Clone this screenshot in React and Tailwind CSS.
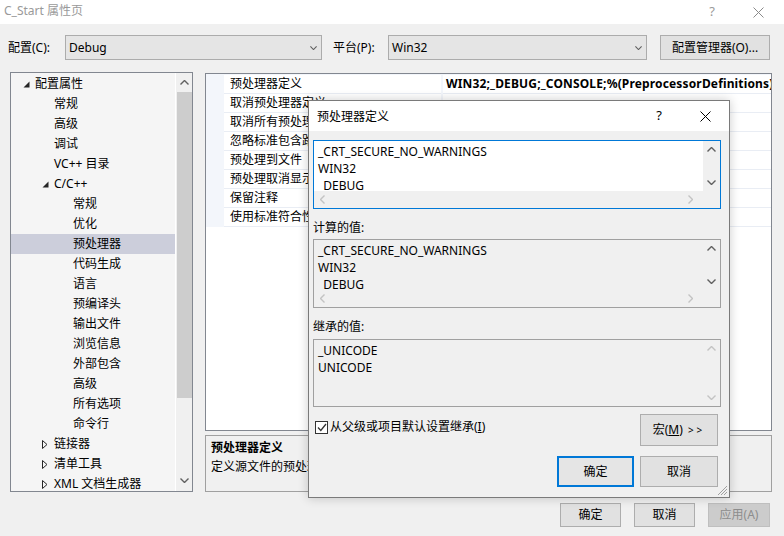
import React from "react";

const Chev = ({ dir = "down", className = "" }) => {
  const vertical = dir === "down" || dir === "up";
  const w = vertical ? 9 : 5;
  const h = vertical ? 5 : 9;
  const d = {
    down: "M0.5 0.5 L4.5 4.5 L8.5 0.5",
    up: "M0.5 4.5 L4.5 0.5 L8.5 4.5",
    left: "M4.5 0.5 L0.5 4.5 L4.5 8.5",
    right: "M0.5 0.5 L4.5 4.5 L0.5 8.5",
  }[dir];
  return (
    <svg width={w} height={h} viewBox={`0 0 ${w} ${h}`} className={className}>
      <path d={d} fill="none" stroke="currentColor" strokeWidth="1.4" />
    </svg>
  );
};

const XIcon = ({ size = 11, className = "" }) => (
  <svg width={size} height={size} viewBox={`0 0 ${size} ${size}`} className={className}>
    <path d={`M0.5 0.5 L${size - 0.5} ${size - 0.5} M${size - 0.5} 0.5 L0.5 ${size - 0.5}`} stroke="currentColor" strokeWidth="1" fill="none" />
  </svg>
);

const Dropdown = ({ text, w }) => (
  <div className={`h-[25px] ${w} border border-[#acacac] bg-[#e5e5e5] flex items-center pl-[3px] pr-[3px]`}>
    <span className="flex-1">{text}</span>
    <Chev dir="down" className="text-[#5f5f5f] w-[7px] h-[4px] mr-[1px]" />
  </div>
);

const tree = [
  { t: "配置属性", l: 0, tri: "open" },
  { t: "常规", l: 1 },
  { t: "高级", l: 1 },
  { t: "调试", l: 1 },
  { t: "VC++ 目录", l: 1 },
  { t: "C/C++", l: 1, tri: "open" },
  { t: "常规", l: 2 },
  { t: "优化", l: 2 },
  { t: "预处理器", l: 2, sel: true },
  { t: "代码生成", l: 2 },
  { t: "语言", l: 2 },
  { t: "预编译头", l: 2 },
  { t: "输出文件", l: 2 },
  { t: "浏览信息", l: 2 },
  { t: "外部包含", l: 2 },
  { t: "高级", l: 2 },
  { t: "所有选项", l: 2 },
  { t: "命令行", l: 2 },
  { t: "链接器", l: 1, tri: "closed" },
  { t: "清单工具", l: 1, tri: "closed" },
  { t: "XML 文档生成器", l: 1, tri: "closed" },
];

const Tri = ({ kind }) =>
  kind === "open" ? (
    <svg width="7" height="7" viewBox="0 0 7 7">
      <path d="M6.5 0.5 L6.5 6.5 L0.5 6.5 Z" fill="#262626" />
    </svg>
  ) : (
    <svg width="6" height="9" viewBox="0 0 6 9">
      <path d="M0.5 0.5 L5 4.5 L0.5 8.5 Z" fill="none" stroke="#262626" strokeWidth="1" />
    </svg>
  );

const props = [
  "预处理器定义",
  "取消预处理器定义",
  "取消所有预处理器定义",
  "忽略标准包含路径",
  "预处理到文件",
  "预处理取消显示行号",
  "保留注释",
  "使用标准符合性预处理器",
];

const TextBox = ({ lines, active, hscroll = true, faded = false, h }) => (
  <div className={`${h} w-full border flex flex-col ${active ? "border-[#0078d7]" : "border-[#a0a0a0]"}`}>
    <div className="flex flex-1 min-h-0">
      <div className={`flex-1 overflow-hidden pl-[4px] pt-[2px] leading-[17px] text-[12px] ${active ? "bg-white" : "bg-[#f0f0f0]"}`}>
        {lines.map((l, i) => (
          <div key={i} className="whitespace-nowrap">{l}</div>
        ))}
      </div>
      <div className={`w-[17px] bg-[#f0f0f0] flex flex-col items-center justify-between py-[6px] ${faded ? "text-[#c3c3c3]" : "text-[#606060]"}`}>
        <Chev dir="up" />
        <Chev dir="down" />
      </div>
    </div>
    {hscroll && (
      <div className="h-[17px] bg-[#f0f0f0] flex items-center justify-between pl-[6px] pr-[27px] text-[#c3c3c3]">
        <Chev dir="left" />
        <Chev dir="right" />
      </div>
    )}
  </div>
);

export default function App() {
  return (
    <div className="w-[784px] h-[536px] bg-[#f0f0f0] relative overflow-hidden text-[12px] text-black [font-family:'Noto_Sans','Noto_Sans_CJK_SC',sans-serif]">
      {/* window title */}
      <div className="h-[24px] bg-white flex items-center pl-[4px] text-[#9a9a9a]">
        <span className="-mt-[3px]">C_Start 属性页</span>
        <span className="ml-auto mr-[38px] text-[13px]">?</span>
        <XIcon size={11} className="mr-[20px] text-[#8a8a8a]" />
      </div>

      {/* config row */}
      <div className="flex items-center h-[25px] mt-[11px] pl-[8px]">
        <span className="w-[57px]">配置(C):</span>
        <Dropdown text="Debug" w="w-[257px]" />
        <span className="ml-[11px] w-[55px]">平台(P):</span>
        <Dropdown text="Win32" w="w-[259px]" />
        <div className="ml-[13px] w-[110px] h-[25px] border border-[#adadad] bg-[#e1e1e1] flex items-center justify-center">
          配置管理器(O)...
        </div>
      </div>

      {/* main area */}
      <div className="flex mt-[12px] pl-[10px] h-[420px]">
        {/* tree */}
        <div className="w-[183px] h-full border border-[#828790] bg-[#f5f5f5] flex">
          <div className="flex-1 overflow-hidden pt-[1px]">
            {tree.map((it, i) => (
              <div
                key={i}
                className={`h-[20px] flex items-center whitespace-nowrap ${it.sel ? "bg-[#cccedb]" : ""}`}
              >
                <div
                  className={`flex items-center justify-center shrink-0 ${
                    it.l === 0 ? "w-[24px] pl-[6px]" : it.l === 1 ? "w-[43px] pl-[25px]" : "w-[62px]"
                  }`}
                >
                  {it.tri && <Tri kind={it.tri} />}
                </div>
                <span>{it.t}</span>
              </div>
            ))}
          </div>
          <div className="w-[17px] bg-[#f0f0f0] border-l border-white flex flex-col items-center text-[#606060]">
            <div className="h-[19px] flex items-center"><Chev dir="up" /></div>
            <div className="w-[15px] h-[306px] bg-[#cdcdcd]" />
            <div className="flex-1" />
            <div className="h-[22px] flex items-center"><Chev dir="down" /></div>
          </div>
        </div>

        {/* right column */}
        <div className="ml-[12px] w-[567px] flex flex-col">
          <div className="mt-[1px] h-[358px] border border-[#828790] bg-white overflow-hidden">
            <div className="h-[1px] bg-[#f3f6fb]" />
            {props.map((p, i) => (
              <div key={i} className="h-[19px] flex">
                <div className="w-[18px] bg-[#f3f6fb]" />
                <div className="w-[217px] border-b border-[#e9edf4] pl-[6px] flex items-center whitespace-nowrap overflow-hidden">
                  {p}
                </div>
                <div className="w-[2px] bg-[#f3f6fb]" />
                <div className="flex-1 border-b border-[#e9edf4] pl-[3px] flex items-center whitespace-nowrap overflow-hidden font-bold tracking-[0.15px]">
                  {i === 0 ? "WIN32;_DEBUG;_CONSOLE;%(PreprocessorDefinitions)" : ""}
                </div>
              </div>
            ))}
          </div>
          <div className="mt-[4px] h-[57px] border border-[#a0a0a0] bg-[#f0f0f0] pl-[5px] pt-[2px] leading-[19px]">
            <div className="font-bold">预处理器定义</div>
            <div>定义源文件的预处理器符号。</div>
          </div>
        </div>
      </div>

      {/* bottom buttons */}
      <div className="flex justify-end pr-[14px] mt-[11px] gap-[13px]">
        <div className="w-[61px] h-[24px] border border-[#adadad] bg-[#e1e1e1] flex items-center justify-center">确定</div>
        <div className="w-[61px] h-[24px] border border-[#adadad] bg-[#e1e1e1] flex items-center justify-center">取消</div>
        <div className="w-[62px] h-[24px] border border-[#bfbfbf] bg-[#cccccc] text-[#8d8d8d] flex items-center justify-center">应用(A)</div>
      </div>

      {/* dialog overlay */}
      <div className="absolute left-[308px] top-[100px] w-[422px] h-[398px] border border-[#7a7a7a] bg-[#f0f0f0] shadow-[0_0_10px_rgba(0,0,0,0.2)] flex flex-col">
        <div className="h-[30px] bg-white flex items-center pl-[8px]">
          <span className="mt-[1px]">预处理器定义</span>
          <span className="ml-auto mr-[38px] text-[13px]">?</span>
          <XIcon size={11} className="mr-[18px] text-black" />
        </div>
        <div className="pl-[4px] pr-[8px] pt-[9px] flex flex-col">
          <TextBox h="h-[69px]" active lines={["_CRT_SECURE_NO_WARNINGS", "WIN32", "_DEBUG"]} />
          <div className="h-[30px] pt-[10px] leading-[17px]">计算的值:</div>
          <TextBox h="h-[69px]" lines={["_CRT_SECURE_NO_WARNINGS", "WIN32", "_DEBUG"]} />
          <div className="h-[31px] pt-[10px] leading-[17px]">继承的值:</div>
          <TextBox h="h-[68px]" hscroll={false} faded lines={["_UNICODE", "UNICODE"]} />
          <div className="flex mt-[7px] items-start pr-[3px]">
            <div className="flex items-center mt-[4px] ml-[2px]">
              <div className="w-[13px] h-[13px] border border-[#333] bg-white flex items-center justify-center">
                <svg width="10" height="9" viewBox="0 0 10 9">
                  <path d="M1 4.5 L3.8 7.5 L9 1" fill="none" stroke="#333" strokeWidth="1.3" />
                </svg>
              </div>
              <span className="ml-[2px]">从父级或项目默认设置继承(<span className="underline">I</span>)</span>
            </div>
            <div className="ml-auto w-[78px] h-[32px] border border-[#adadad] bg-[#e1e1e1] flex items-center justify-center">
              宏(<span className="underline">M</span>)&nbsp;<span className="text-[10px] tracking-[3px] ml-[2px]">&gt;&gt;</span>
            </div>
          </div>
          <div className="flex justify-end mt-[10px] gap-[6px] pr-[3px]">
            <div className="w-[77px] h-[31px] border-2 border-[#0078d7] bg-[#e5e5e5] flex items-center justify-center">确定</div>
            <div className="w-[78px] h-[31px] border border-[#adadad] bg-[#e1e1e1] flex items-center justify-center">取消</div>
          </div>
        </div>
        <svg width="10" height="10" viewBox="0 0 10 10" className="absolute right-[1px] bottom-[1px]">
          <path d="M9 3 L3 9 M9 6 L6 9 M9 0 L0 9" stroke="#a0a0a0" strokeWidth="1" />
        </svg>
      </div>
    </div>
  );
}
